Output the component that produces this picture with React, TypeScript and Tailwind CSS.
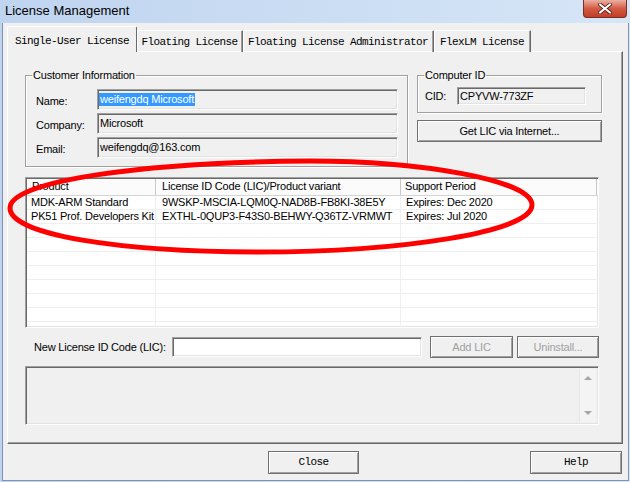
import React from "react";

const face = "font-['Liberation_Sans',Arial,sans-serif] text-[11px] tracking-[-0.2px] leading-[13px]";
const sans = `${face} text-black`;
const mono = "font-['Liberation_Mono','Courier_New',monospace] text-[11px] tracking-[-0.6px] leading-[13px] text-black";
const sunken =
  "border border-t-[#a0a0a0] border-l-[#a0a0a0] border-b-white border-r-white shadow-[inset_1px_1px_0_#696969,inset_-1px_-1px_0_#e3e3e3]";
const raised =
  "border border-[#707070] bg-[#f0f0f0] shadow-[inset_1px_1px_0_#ffffff,inset_-1px_-1px_0_#a0a0a0]";
const etched = "border border-[#a0a0a0] shadow-[1px_1px_0_#ffffff,inset_1px_1px_0_#ffffff]";

const licenses = [
  ["MDK-ARM Standard", "9WSKP-MSCIA-LQM0Q-NAD8B-FB8KI-38E5Y", "Expires: Dec 2020"],
  ["PK51 Prof. Developers Kit", "EXTHL-0QUP3-F43S0-BEHWY-Q36TZ-VRMWT", "Expires: Jul 2020"],
  ["", "", ""],
  ["", "", ""],
  ["", "", ""],
  ["", "", ""],
  ["", "", ""],
  ["", "", ""],
  ["", "", ""],
  ["", "", ""],
];

const tabs = [
  { label: "Floating License", w: "w-[106px]" },
  { label: "Floating License Administrator", w: "w-[191px]" },
  { label: "FlexLM License", w: "w-[97px]" },
];

function Field({ label, children }: { label: string; children: React.ReactNode }) {
  return (
    <div className="flex items-center">
      <span className="w-[62px] pl-px pt-[3px]">{label}</span>
      <div className={`${sunken} w-[301px] h-[21px] bg-[#f0f0f0] flex items-center pl-px`}>{children}</div>
    </div>
  );
}

export default function App() {
  return (
    <div className={`${sans} relative w-[630px] h-[482px] flex flex-col bg-linear-to-r from-[#bfd4ef] to-[#d6e6f7] overflow-hidden`}>
      {/* title bar */}
      <div className="h-[23px] flex shrink-0">
        <span className="pl-[5px] pt-[3px] text-[13px] tracking-normal leading-[16px] font-['Liberation_Sans',Arial,sans-serif]">
          License Management
        </span>
        <div className="ml-auto mr-[3px] w-[44px] h-[18px] rounded-b-[4px] border border-t-0 border-[#7a2d22] bg-linear-to-b from-[#eab0a2] via-[#d35a43] to-[#c23d26] flex items-center justify-center">
          <svg width="14" height="11" viewBox="0 0 14 11">
            <path d="M2 1.5 L12 9.5 M12 1.5 L2 9.5" stroke="#4b1a12" strokeWidth="3.6" strokeLinecap="square" />
            <path d="M2 1.5 L12 9.5 M12 1.5 L2 9.5" stroke="#ffffff" strokeWidth="2" strokeLinecap="square" />
          </svg>
        </div>
      </div>

      {/* client area */}
      <div className="flex-1 ml-[2px] mr-[1px] mb-[1px] border-x border-b border-[#7f93ad] bg-[#f0f0f0] pl-[4px] pt-[3px] flex flex-col">
        {/* tabs */}
        <div className="relative z-10 flex items-end -mb-px">
          <div className={`${mono} w-[130px] h-[26px] bg-[#f0f0f0] border-t border-l border-white border-r border-r-[#696969] rounded-t-[2px] flex justify-center pt-[8px]`}>
            Single-User License
          </div>
          {tabs.map((t) => (
            <div
              key={t.label}
              className={`${mono} ${t.w} h-[22px] border-t border-white border-r border-r-[#696969] shadow-[inset_-1px_0_0_#a0a0a0,inset_1px_0_0_#ffffff] flex justify-center pt-[5px]`}
            >
              {t.label}
            </div>
          ))}
        </div>

        {/* tab panel */}
        <div className="w-[616px] h-[393px] border border-t-white border-l-white border-r-[#696969] border-b-[#696969] shadow-[inset_-1px_-1px_0_#a0a0a0] pl-[17px] pt-[17px] flex flex-col">
          <div className="flex items-start gap-[9px]">
            <fieldset className={`${etched} w-[383px] h-[98px] px-[9px]`}>
              <legend className="-ml-[3px] px-px">Customer Information</legend>
              <div className="mt-[7px] flex flex-col gap-[3px]">
                <Field label="Name:">
                  <span className="bg-[#3399ff] text-white px-px">weifengdq Microsoft</span>
                </Field>
                <Field label="Company:">
                  <span className="px-px">Microsoft</span>
                </Field>
                <Field label="Email:">
                  <span className="px-px">weifengdq@163.com</span>
                </Field>
              </div>
            </fieldset>

            <div className="flex flex-col">
              <fieldset className={`${etched} w-[185px] h-[44px] px-[7px]`}>
                <legend className="-ml-px px-px">Computer ID</legend>
                <div className="mt-[5px] flex items-center">
                  <span className="w-[32px]">CID:</span>
                  <div className={`${sunken} w-[129px] h-[18px] bg-[#f0f0f0] flex items-center pl-[2px]`}>CPYVW-773ZF</div>
                </div>
              </fieldset>
              <button className={`${raised} ${sans} mt-[7px] w-[185px] h-[22px]`}>Get LIC via Internet...</button>
            </div>
          </div>

          {/* license list */}
          <div className={`${sunken} mt-[10px] w-[574px] h-[151px] bg-white overflow-hidden flex flex-col`}>
            <div className="flex h-[17px] shrink-0 bg-[#fbfbfb] border-b border-[#d5d5d5] mt-px ml-px">
              <div className="w-[129px] border-r border-[#c8c8c8] pl-[5px] pt-px">Product</div>
              <div className="w-[245px] border-r border-[#c8c8c8] pl-[6px] pt-px">License ID Code (LIC)/Product variant</div>
              <div className="w-[196px] border-r border-[#c8c8c8] pl-[4px] pt-px">Support Period</div>
            </div>
            {licenses.map((r, i) => (
              <div key={i} className="flex h-[14px] shrink-0 border-b border-[#efefef] ml-px">
                <div className="w-[129px] border-r border-[#efefef] pl-[4px] whitespace-nowrap overflow-hidden">{r[0]}</div>
                <div className="w-[245px] border-r border-[#efefef] pl-[6px] whitespace-nowrap overflow-hidden">{r[1]}</div>
                <div className="w-[196px] pl-[5px] whitespace-nowrap">{r[2]}</div>
              </div>
            ))}
          </div>

          {/* new license */}
          <div className="mt-[8px] flex items-center h-[22px]">
            <span className="w-[147px] pl-[9px]">New License ID Code (LIC):</span>
            <div className={`${sunken} w-[250px] h-[20px] bg-white`} />
            <button className={`${raised} ${face} text-[#a0a0a0] ml-[8px] w-[83px] h-[22px]`}>Add LIC</button>
            <button className={`${raised} ${face} text-[#a0a0a0] ml-[4px] w-[82px] h-[22px]`}>Uninstall...</button>
          </div>

          {/* output box */}
          <div className={`${sunken} mt-[8px] w-[574px] h-[59px] bg-[#f0f0f0] flex justify-end p-[2px]`}>
            <div className="w-[17px] h-full bg-[#f4f4f4] border-l border-[#e6e6e6] flex flex-col items-center justify-between py-[6px]">
              <svg width="8" height="5" viewBox="0 0 8 5">
                <path d="M0 5 L4 1 L8 5 Z" fill="#a6a6a6" />
              </svg>
              <svg width="8" height="5" viewBox="0 0 8 5">
                <path d="M0 0 L4 4 L8 0 Z" fill="#a6a6a6" />
              </svg>
            </div>
          </div>
        </div>

        {/* dialog buttons */}
        <div className="mt-[7px] flex">
          <button className={`${raised} ${mono} ml-[261px] w-[91px] h-[23px]`}>Close</button>
          <button className={`${raised} ${mono} ml-[171px] w-[92px] h-[23px]`}>Help</button>
        </div>
      </div>

      {/* red annotation */}
      <svg className="absolute inset-0 pointer-events-none" width="630" height="482" viewBox="0 0 630 482">
        <path
          d="M10 208 C10 180 150 162 310 161 C420 161 532 180 532 205 C532 232 400 252 260 252 C120 252 10 235 10 208 Z"
          fill="none"
          stroke="#ff0000"
          strokeWidth="5"
        />
      </svg>
    </div>
  );
}
